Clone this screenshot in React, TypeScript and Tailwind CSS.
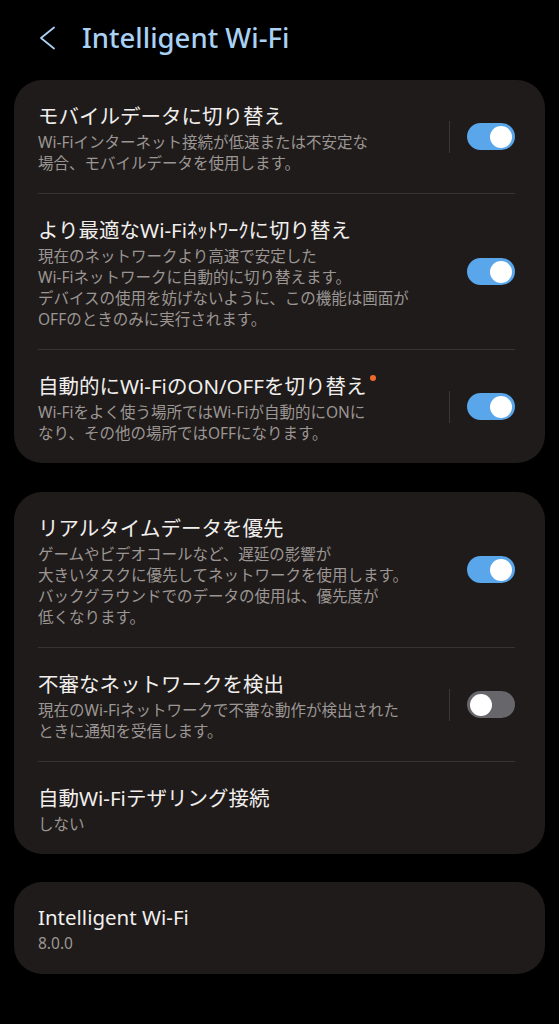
type Row = {
  title: string;
  lines: string[];
  toggle?: "on" | "off";
  split?: boolean;
  dot?: boolean;
};

const card1: Row[] = [
  {
    title: "モバイルデータに切り替え",
    lines: ["Wi-Fiインターネット接続が低速または不安定な", "場合、モバイルデータを使用します。"],
    toggle: "on",
    split: true,
  },
  {
    title: "より最適なWi-Fiﾈｯﾄﾜｰｸに切り替え",
    lines: [
      "現在のネットワークより高速で安定した",
      "Wi-Fiネットワークに自動的に切り替えます。",
      "デバイスの使用を妨げないように、この機能は画面が",
      "OFFのときのみに実行されます。",
    ],
    toggle: "on",
  },
  {
    title: "自動的にWi-FiのON/OFFを切り替え",
    lines: ["Wi-Fiをよく使う場所ではWi-Fiが自動的にONに", "なり、その他の場所ではOFFになります。"],
    toggle: "on",
    split: true,
    dot: true,
  },
];

const card2: Row[] = [
  {
    title: "リアルタイムデータを優先",
    lines: [
      "ゲームやビデオコールなど、遅延の影響が",
      "大きいタスクに優先してネットワークを使用します。",
      "バックグラウンドでのデータの使用は、優先度が",
      "低くなります。",
    ],
    toggle: "on",
  },
  {
    title: "不審なネットワークを検出",
    lines: ["現在のWi-Fiネットワークで不審な動作が検出された", "ときに通知を受信します。"],
    toggle: "off",
    split: true,
  },
  {
    title: "自動Wi-Fiテザリング接続",
    lines: ["しない"],
  },
];

const Toggle = ({ on }: { on: boolean }) => (
  <div
    className={`w-[48px] h-[27px] rounded-full flex items-center px-[3px] ${
      on ? "bg-[#5aa6ea] justify-end" : "bg-[#67666b] justify-start"
    }`}
  >
    <div className="w-[22px] h-[22px] rounded-full bg-white" />
  </div>
);

const SettingRow = ({ row, last }: { row: Row; last: boolean }) => (
  <div className={`flex items-center ${last ? "" : "border-b border-[#38332f]"}`}>
    <div className="flex-1 pt-[22px] pb-[19px]">
      <div className="text-[20.5px] leading-[28px] text-[#f1efee]">
        {row.title}
        {row.dot && (
          <span className="inline-block w-[6px] h-[6px] rounded-full bg-[#f26a2a] ml-[4px] align-top relative top-[3px]" />
        )}
      </div>
      <div className="mt-[2px] text-[15.5px] leading-[21px] text-[#9b9693]">
        {row.lines.map((l) => (
          <div key={l} className="whitespace-nowrap">
            {l}
          </div>
        ))}
      </div>
    </div>
    {row.toggle && (
      <div className="flex items-center">
        <div className={`w-px h-[32px] mr-[17px] ${row.split ? "bg-[#3b3735]" : "bg-transparent"}`} />
        <Toggle on={row.toggle === "on"} />
      </div>
    )}
  </div>
);

const Card = ({ rows }: { rows: Row[] }) => (
  <div className="mx-[14px] rounded-[28px] bg-[#1f1b1a] pl-[24px] pr-[30px]">
    {rows.map((r, i) => (
      <SettingRow key={r.title} row={r} last={i === rows.length - 1} />
    ))}
  </div>
);

export default function App() {
  return (
    <div
      className="w-[559px] h-[1024px] bg-black overflow-hidden"
      style={{ fontFamily: '"Noto Sans", "Noto Sans CJK JP", sans-serif' }}
    >
      <div className="h-[80px] flex items-center pl-[39px] pb-[5px]">
        <svg width="18" height="24" viewBox="0 0 18 24" fill="none">
          <polyline points="15,1.5 2,12 15,22.5" stroke="#a9d1f4" strokeWidth="1.8" strokeLinecap="round" strokeLinejoin="round" />
        </svg>
        <span className="ml-[25px] text-[27.5px] text-[#a9d1f4] font-medium">Intelligent Wi-Fi</span>
      </div>
      <Card rows={card1} />
      <div className="h-[29px]" />
      <Card rows={card2} />
      <div className="h-[28px]" />
      <div className="mx-[14px] rounded-[28px] bg-[#1f1b1a] px-[24px] pt-[21px] pb-[20px]">
        <div className="text-[20.5px] leading-[28px] text-[#f1efee]">Intelligent Wi-Fi</div>
        <div className="mt-[2px] text-[15.5px] leading-[21px] text-[#9b9693]">8.0.0</div>
      </div>
    </div>
  );
}
